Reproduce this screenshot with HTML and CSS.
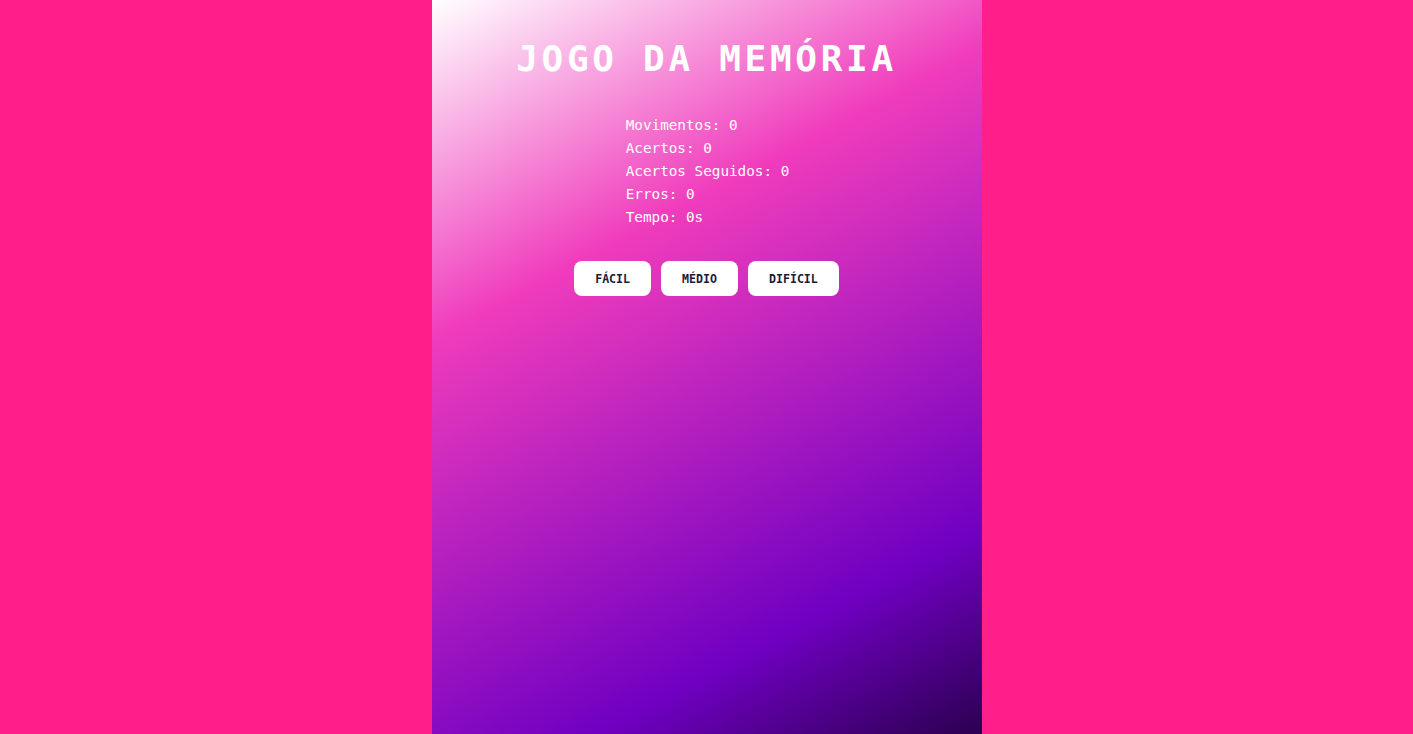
FILE: index.html
```html
<!DOCTYPE html>
<html lang="pt-BR">
<head>
    <meta charset="UTF-8">
    <meta name="viewport" content="width=device-width, initial-scale=1.0">
    <title>Jogo da Memória</title>
    <link rel="stylesheet" href="styles.css">
</head>
<body>

    <div class="game">
        <h1>JOGO DA MEMÓRIA</h1>

        <div class="stats">
            <p>Movimentos: <span id="moves">0</span></p>
            <p>Acertos: <span id="hits">0</span></p>
            <p>Acertos Seguidos: <span id="streak">0</span></p>
            <p>Erros: <span id="errors">0</span></p>
            <p>Tempo: <span id="time">0</span>s</p>
        </div>

        <div class="levels">
            <button>FÁCIL</button>
            <button>MÉDIO</button>
            <button>DIFÍCIL</button>
        </div>

        <div id="board" class="board"></div>
    </div>

</body>
</html>
```

FILE: styles.css
```css
* {
    margin: 0;
    padding: 0;
    box-sizing: border-box;
}

body {
    font-family: "DejaVu Sans Mono", "Liberation Mono", monospace;
    background-color: #ff1f8a;
}

.game {
    width: 550px;
    min-height: 100vh;
    margin: 0 auto;
    padding-top: 38px;
    display: flex;
    flex-direction: column;
    align-items: center;
    background: linear-gradient(152deg, #ffffff 0%, #f03cbc 33%, #7000c2 80%, #2b004f 100%);
    color: #ffffff;
}

h1 {
    font-size: 36px;
    font-weight: bold;
    letter-spacing: 3.7px;
    line-height: 42px;
    margin-bottom: 34px;
}

.stats {
    font-size: 14.3px;
    line-height: 23px;
    margin-left: 2px;
    margin-bottom: 32px;
}

.levels {
    display: flex;
    gap: 10px;
}

.levels button {
    font-family: "DejaVu Sans Mono", "Liberation Mono", monospace;
    font-size: 11.6px;
    font-weight: bold;
    color: #1a1a3a;
    background-color: #ffffff;
    border: none;
    border-radius: 8px;
    height: 35px;
    padding: 0 21px;
    cursor: pointer;
}
```
